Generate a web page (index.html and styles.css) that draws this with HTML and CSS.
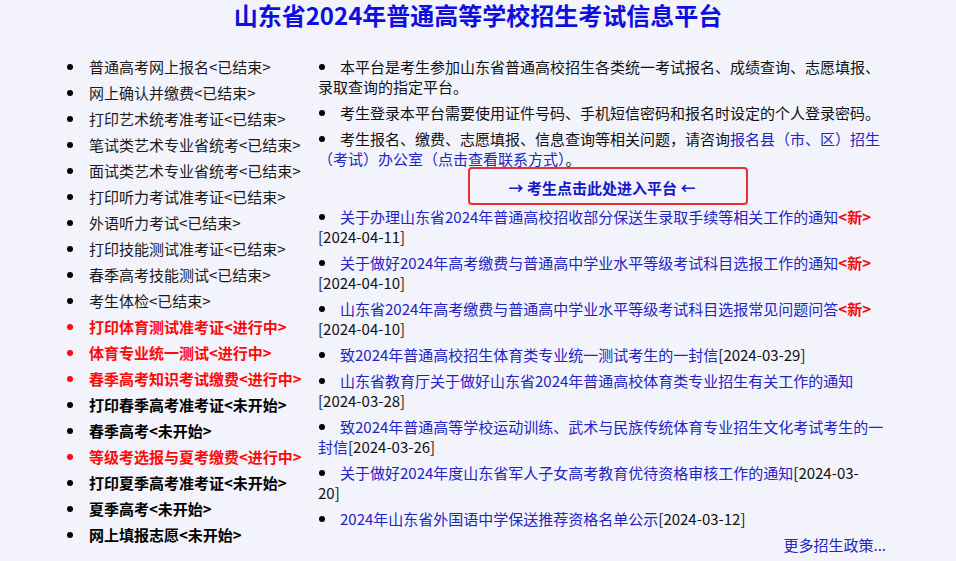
FILE: index.html
```html
<!DOCTYPE html>
<html lang="zh-CN">
<head>
<meta charset="utf-8">
<title>山东省2024年普通高等学校招生考试信息平台</title>
<link rel="stylesheet" href="styles.css">
</head>
<body>
<h1 class="title">山东省2024年普通高等学校招生考试信息平台</h1>
<div class="main">
  <ul class="steps">
    <li class="done">普通高考网上报名&lt;已结束&gt;</li>
    <li class="done">网上确认并缴费&lt;已结束&gt;</li>
    <li class="done">打印艺术统考准考证&lt;已结束&gt;</li>
    <li class="done">笔试类艺术专业省统考&lt;已结束&gt;</li>
    <li class="done">面试类艺术专业省统考&lt;已结束&gt;</li>
    <li class="done">打印听力考试准考证&lt;已结束&gt;</li>
    <li class="done">外语听力考试&lt;已结束&gt;</li>
    <li class="done">打印技能测试准考证&lt;已结束&gt;</li>
    <li class="done">春季高考技能测试&lt;已结束&gt;</li>
    <li class="done">考生体检&lt;已结束&gt;</li>
    <li class="active">打印体育测试准考证&lt;进行中&gt;</li>
    <li class="active">体育专业统一测试&lt;进行中&gt;</li>
    <li class="active">春季高考知识考试缴费&lt;进行中&gt;</li>
    <li class="todo">打印春季高考准考证&lt;未开始&gt;</li>
    <li class="todo">春季高考&lt;未开始&gt;</li>
    <li class="active">等级考选报与夏考缴费&lt;进行中&gt;</li>
    <li class="todo">打印夏季高考准考证&lt;未开始&gt;</li>
    <li class="todo">夏季高考&lt;未开始&gt;</li>
    <li class="todo">网上填报志愿&lt;未开始&gt;</li>
  </ul>
  <div class="content">
    <ul class="intro">
      <li>本平台是考生参加山东省普通高校招生各类统一考试报名、成绩查询、志愿填报、录取查询的指定平台。</li>
      <li>考生登录本平台需要使用证件号码、手机短信密码和报名时设定的个人登录密码。</li>
      <li>考生报名、缴费、志愿填报、信息查询等相关问题，请咨询<a class="link" href="#">报名县（市、区）招生（考试）办公室（点击查看联系方式）</a>。</li>
    </ul>
    <div class="enter"><a class="enter-link" href="#">→ 考生点击此处进入平台 ←</a></div>
    <ul class="news">
      <li><a class="link" href="#">关于办理山东省2024年普通高校招收部分保送生录取手续等相关工作的通知</a><span class="new">&lt;新&gt;</span>[2024-04-11]</li>
      <li><a class="link" href="#">关于做好2024年高考缴费与普通高中学业水平等级考试科目选报工作的通知</a><span class="new">&lt;新&gt;</span>[2024-04-10]</li>
      <li><a class="link" href="#">山东省2024年高考缴费与普通高中学业水平等级考试科目选报常见问题问答</a><span class="new">&lt;新&gt;</span>[2024-04-10]</li>
      <li><a class="link" href="#">致2024年普通高校招生体育类专业统一测试考生的一封信</a>[2024-03-29]</li>
      <li><a class="link" href="#">山东省教育厅关于做好山东省2024年普通高校体育类专业招生有关工作的通知</a>[2024-03-28]</li>
      <li><a class="link" href="#">致2024年普通高等学校运动训练、武术与民族传统体育专业招生文化考试考生的一封信</a>[2024-03-26]</li>
      <li><a class="link" href="#">关于做好2024年度山东省军人子女高考教育优待资格审核工作的通知</a>[2024-03-<br>20]</li>
      <li><a class="link" href="#">2024年山东省外国语中学保送推荐资格名单公示</a>[2024-03-12]</li>
    </ul>
    <div class="more"><a class="link" href="#">更多招生政策...</a></div>
  </div>
</div>
</body>
</html>
```

FILE: styles.css
```css
html, body {
  margin: 0;
  padding: 0;
  background: #f3f3fb;
}

body {
  font-family: "Noto Sans CJK SC", "Noto Sans", "DejaVu Sans", sans-serif;
  font-size: 15px;
  color: #111;
}

.title {
  margin: 0;
  font-size: 24px;
  line-height: 30px;
  font-weight: bold;
  color: #0e0ee0;
  text-align: center;
}

.main {
  display: flex;
  padding: 27px 0 0 66px;
}

ul {
  list-style: none;
  margin: 0;
  padding: 0;
}

li {
  line-height: 20px;
  margin-bottom: 6px;
}

li::before {
  content: "";
  display: inline-block;
  width: 6px;
  height: 6px;
  border-radius: 50%;
  background: #000;
  vertical-align: middle;
  margin: 0 15px 3px 1px;
}

.steps {
  width: 244px;
  flex: none;
}

.steps li {
  white-space: nowrap;
  color: #1a1a1a;
}

.steps li::before {
  margin: 0 16px 3px 1px;
}

.steps .active {
  color: #ff0a0a;
  font-weight: bold;
}

.steps .active::before {
  background: #ff0a0a;
}

.steps .todo {
  color: #000;
  font-weight: bold;
}

.content {
  width: 568px;
  margin-left: 8px;
  flex: none;
}

.link {
  color: #2424c4;
  text-decoration: none;
}

.new {
  color: #f20c0c;
  font-weight: bold;
}

.enter {
  position: relative;
  text-align: center;
  line-height: 20px;
  padding-top: 3px;
  margin-bottom: 9px;
}

.enter-link {
  color: #1717cc;
  font-weight: bold;
  text-decoration: none;
}

.enter::after {
  content: "";
  position: absolute;
  left: 150px;
  top: -8px;
  width: 276px;
  height: 34px;
  border: 2px solid #e8322f;
  border-radius: 4px;
}

.more {
  text-align: right;
  line-height: 20px;
}
```
